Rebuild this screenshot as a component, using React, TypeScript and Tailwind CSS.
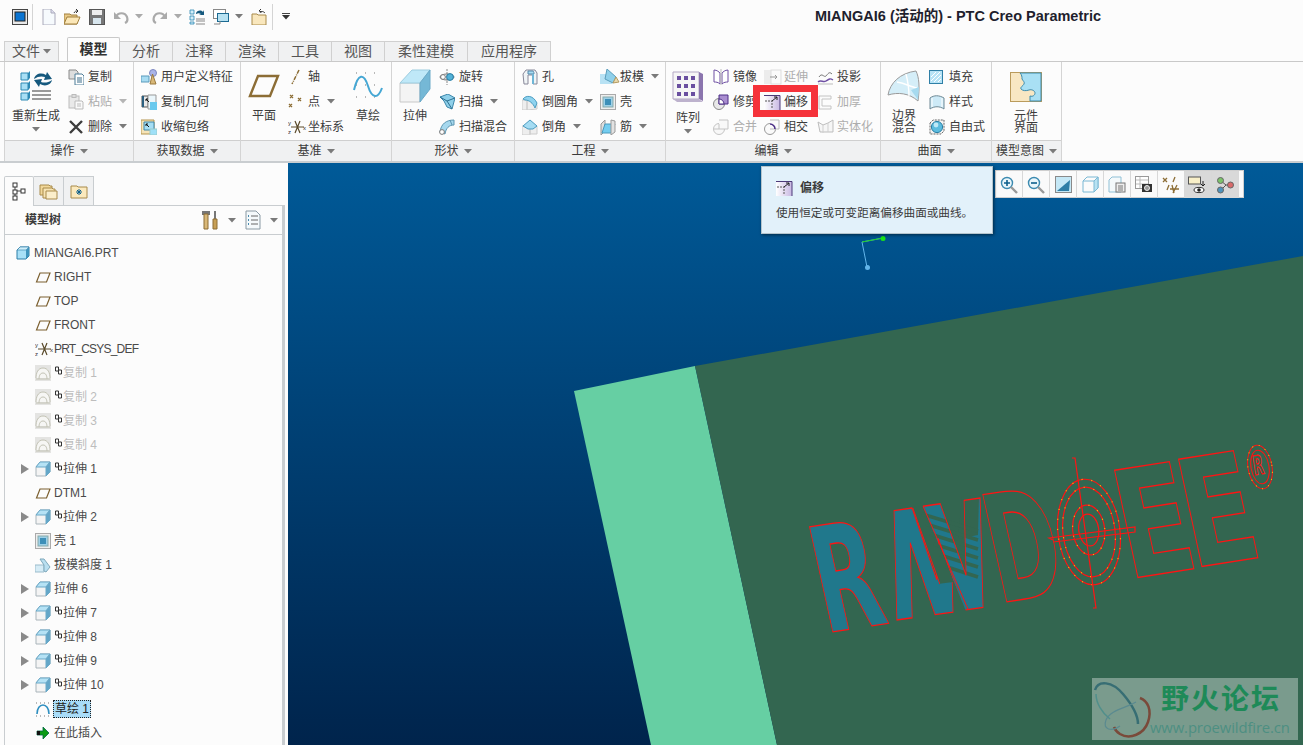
import type { ReactNode } from 'react';

const FONT = "font-['Liberation_Sans','Noto_Sans_CJK_SC',sans-serif]";

function Svg({ w = 16, h = 16, children }: { w?: number; h?: number; children: ReactNode }) {
  return (
    <svg width={w} height={h} viewBox={`0 0 ${w} ${h}`} className="shrink-0">
      {children}
    </svg>
  );
}

function Caret({ color = '#7a7a7a' }: { color?: string }) {
  return (
    <svg width="8" height="5" viewBox="0 0 8 5" className="shrink-0">
      <path d="M0 0h8L4 4.5z" fill={color} />
    </svg>
  );
}

// 小图标
const cube = (
  <Svg>
    <path d="M1 6l4-5h10v10l-4 4H1z" fill="#f4f4f4" stroke="#a9b4ba" />
    <path d="M1 6l4-5h10l-4 5z" fill="#b5e2f5" stroke="#6aa9c8" />
    <path d="M11 6l4-5v10l-4 4z" fill="#63a6c8" stroke="#6aa9c8" />
  </Svg>
);
const part = (
  <Svg w={14}>
    <path d="M1 5l3-3h9v9l-3 3H1z" fill="#a8e0f7" stroke="#2c7ea8" />
    <path d="M10 5l3-3v9l-3 3z" fill="#3f94bd" />
    <path d="M1 5l3-3h9l-3 3z" fill="#cfeefa" stroke="#2c7ea8" strokeWidth="0.6" />
  </Svg>
);
const plane = (
  <Svg>
    <path d="M1.500 13L5 4h10l-3.500 9z" fill="none" stroke="#7b5f2f" strokeWidth="1.2" />
  </Svg>
);
const csys = (
  <Svg w={20}>
    <path d="M7 2l5 12M12 2L7 14M3 8h13" stroke="#5a4a2a" strokeWidth="1.2" fill="none" />
    <text x="0" y="6" fontSize="6" fill="#333">y</text>
    <text x="0" y="15" fontSize="6" fill="#333">z</text>
    <text x="15" y="11" fontSize="6" fill="#333">x</text>
  </Svg>
);
const copyGrey = (
  <Svg>
    <rect width="16" height="16" fill="#e4e4e2" />
    <path d="M1 13c0-5 2-10 7-10s7 5 7 10" fill="#f6f6f4" stroke="#c2c2b4" />
    <path d="M4 14c0-3 1-6 4-6s4 3 4 6M1 14h14" fill="none" stroke="#c2c2b4" />
  </Svg>
);
const shell = (
  <Svg>
    <rect x="0.5" y="0.5" width="15" height="15" fill="#eee" stroke="#aaa" />
    <rect x="3" y="3" width="10" height="10" fill="#9cd0e8" stroke="#8aa" />
    <rect x="5" y="5" width="6" height="6" fill="#3d8fb8" />
  </Svg>
);
const draft = (
  <Svg>
    <path d="M0 8h9v7H0z" fill="#d6ecf6" stroke="#9bbccc" />
    <path d="M5 2h4l6 8-4 5-2-1V8z" fill="#b9dff0" stroke="#7fa8bb" />
  </Svg>
);
const sketchNode = (
  <Svg>
    <path d="M2 13c0-6 3-9 6-9s6 3 6 9" fill="none" stroke="#2f8fc0" strokeWidth="1.6" />
    <path d="M1 2h14M1 15h14" stroke="#777" strokeDasharray="1 3" />
  </Svg>
);
const insert = (
  <Svg>
    <path d="M2 6h6V2l6 6-6 6v-4H2z" fill="#0b9a14" stroke="#064" strokeWidth="0.8" />
    <path d="M2 6h3v4H2z" fill="#111" />
  </Svg>
);

const copyDoc = (
  <Svg>
    <path d="M1 1h7l2 2v7H1z" fill="#ddd" stroke="#8a8a8a" />
    <path d="M7 5h7l2 2v9H7z" fill="#fff" stroke="#4d7c98" />
    <path d="M9 9h5M9 11h5M9 13h5" stroke="#3a6c8a" />
  </Svg>
);
const pasteGrey = (
  <Svg>
    <rect x="1" y="2" width="10" height="12" fill="#e9e9e9" stroke="#bbb" />
    <rect x="4" y="0.5" width="4" height="3" fill="#ddd" stroke="#bbb" />
    <path d="M7 7h7l1 1v7H7z" fill="#fafafa" stroke="#bbb" />
    <path d="M9 10h4M9 12h4" stroke="#bbb" />
  </Svg>
);
const del = (
  <Svg>
    <path d="M2 2l12 12M14 2L2 14" stroke="#3d3d3d" strokeWidth="2.4" />
  </Svg>
);
const udf = (
  <Svg>
    <path d="M0 7h8v6H0z" fill="#a8dcf2" stroke="#5a9abb" />
    <circle cx="12" cy="4" r="3.500" fill="#aab4e8" stroke="#7c86c0" />
    <path d="M9 15l2.500-10 3.500 10z" fill="#d9b878" stroke="#9a7a3e" />
  </Svg>
);
const copyGeom = (
  <Svg>
    <path d="M1 2h6v11H1z" fill="#e8e8e8" stroke="#555" />
    <path d="M2 2v11" stroke="#2a5f80" strokeWidth="2" />
    <path d="M7 1h8v14H7z" fill="#eaf6fb" stroke="#999" />
    <path d="M9 8h7v8H9z" fill="#69c9ee" />
    <path d="M5 5l3 3M5 5h2M5 5v2" stroke="#111" />
  </Svg>
);
const shrink = (
  <Svg>
    <path d="M0 1h13v14H0z" fill="#f6e4b8" stroke="#b4954f" />
    <path d="M3 3h10v8H3z" fill="#a6def4" stroke="#3f86a8" />
    <path d="M5 5l3 3M5 5h2M5 5v2" stroke="#111" />
    <path d="M9 10h7v6H9z" fill="#9fe0f8" stroke="#9cc" />
  </Svg>
);
const axis = (
  <Svg>
    <path d="M11 1L4 15" stroke="#8c6d35" strokeWidth="1.5" strokeDasharray="4 1 1 1" fill="none" />
  </Svg>
);
const point = (
  <Svg>
    <path d="M2 1l3 3M5 1L2 4M10 4l3 3M13 4l-3 3M1 10l3 3M4 10l-3 3" stroke="#8c6d35" strokeWidth="1.3" />
  </Svg>
);
const revolve = (
  <Svg>
    <path d="M8 0v16" stroke="#888" strokeDasharray="2 1" />
    <ellipse cx="8" cy="8" rx="7" ry="3" fill="none" stroke="#777" />
    <circle cx="11" cy="8" r="3.400" fill="#53b2d8" stroke="#2a7ea4" />
    <circle cx="4" cy="8" r="2.400" fill="#fff" stroke="#777" />
  </Svg>
);
const sweep = (
  <Svg>
    <path d="M1 3l8-3 7 4-3 11-5-2-3-6z" fill="#8fd0ea" stroke="#3b86aa" />
    <path d="M1 3l7 4 8-3M8 7l5 8" stroke="#2d6f90" fill="none" />
  </Svg>
);
const sweepBlend = (
  <Svg>
    <path d="M1 13C2 5 7 1 15 1v5c-5 0-8 3-9 9z" fill="#a6d8ee" stroke="#5c96b2" />
    <circle cx="3" cy="13" r="2.400" fill="#fff" stroke="#777" />
    <path d="M11 1l2 5" stroke="#5c96b2" />
  </Svg>
);
const hole = (
  <Svg>
    <path d="M1 5l3-4h9l2 3v11h-4V6H6v9H2z" fill="#f0f4f6" stroke="#889" />
    <path d="M6 2h5c1 1 1 2 1 3H6z" fill="#a8dcf2" stroke="#58a" />
    <path d="M10 5h2v10h-2z" fill="#6fb6d6" />
  </Svg>
);
const round = (
  <Svg>
    <path d="M0 6h5v10H0zM5 6v10l10-1V12C15 8 10 4 5 6z" fill="#eee" stroke="#ccc" />
    <path d="M1 5C4 1 11 1 15 9l-2 5C11 9 7 6 3 6z" fill="#8fd3ef" stroke="#4c9cc0" />
  </Svg>
);
const chamfer = (
  <Svg>
    <path d="M0 7h8v9H0zM8 7l7 0v8H8z" fill="#eee" stroke="#ccc" />
    <path d="M1 7l7-6 7 6-4 3H6z" fill="#a4dcf3" stroke="#4c9cc0" />
  </Svg>
);
const pullDraft = (
  <Svg w={20}>
    <path d="M0 5h12v10H0z" fill="#b8e2f4" />
    <path d="M7 0l9 8-3 6-8-4z" fill="#8fd0ea" stroke="#5b9dbb" />
    <path d="M13 14l3-6 3 5z" fill="#e8d9ae" stroke="#b49a5f" />
  </Svg>
);
const ribs = (
  <Svg>
    <path d="M1 5l4-4v11l-4 4z" fill="#ddd" stroke="#999" />
    <path d="M5 5h10l-3 9H2z" fill="#74cdf0" stroke="#4a9abd" />
    <path d="M11 1l4 1v11l-4 3z" fill="#e2e2e2" stroke="#999" />
  </Svg>
);
const mirror = (
  <Svg>
    <path d="M1 1c3 0 5 2 6 3v11c-2-2-4-2-6-2z" fill="#fff" stroke="#6e4fa3" />
    <path d="M15 1c-3 0-5 2-6 3v11c2-2 4-2 6-2z" fill="#fff" stroke="#6e4fa3" />
    <path d="M8 0v16" stroke="#bbb" />
  </Svg>
);
const trim = (
  <Svg>
    <circle cx="6" cy="10" r="5.500" fill="#e8e8e8" stroke="#888" />
    <path d="M6 1h9v9H6z" fill="#a98ed0" stroke="#4c2f86" />
    <path d="M6 10V5a5 5 0 0 1 5 5z" fill="#fff" stroke="#4c2f86" />
  </Svg>
);
const merge = (
  <Svg>
    <circle cx="6" cy="10" r="5.500" fill="#f8f8f8" stroke="#c4c4c4" />
    <path d="M6 1h9v9H6" fill="#f8f8f8" stroke="#c4c4c4" />
    <path d="M1 10h5V5" fill="none" stroke="#c4c4c4" />
  </Svg>
);
const extend = (
  <Svg w={18}>
    <rect x="0" y="1" width="7" height="14" fill="#ececec" />
    <rect x="7" y="1" width="10" height="14" fill="#fbfbfb" stroke="#ddd" />
    <path d="M6 8h7M11 6l2 2-2 2" stroke="#999" fill="none" />
  </Svg>
);
const offset = (
  <Svg w={18}>
    <defs>
      <linearGradient id="off" x1="0" y1="0" x2="1" y2="0">
        <stop offset="0" stopColor="#fff" />
        <stop offset="1" stopColor="#c8b7e2" />
      </linearGradient>
    </defs>
    <path d="M0 1h16v15H0z" fill="url(#off)" />
    <path d="M0 1.500h16V16" fill="none" stroke="#4c3a78" />
    <path d="M1 7h7v8" fill="none" stroke="#555" strokeDasharray="2 1" />
    <path d="M8 7l5-4M10 3h3v3" fill="none" stroke="#222" />
  </Svg>
);
const intersect = (
  <Svg>
    <circle cx="6" cy="10" r="5.500" fill="#fafafa" stroke="#999" />
    <path d="M6 1h9v9H6" fill="#fafafa" stroke="#bbb" />
    <path d="M6 5a5 5 0 0 1 5 5" fill="none" stroke="#4c2f86" strokeWidth="1.6" />
  </Svg>
);
const project = (
  <Svg w={18}>
    <path d="M2 8c3-5 5 1 7-1s3-5 6-2" fill="none" stroke="#777" />
    <path d="M1 13c3-3 5 1 8-1s4-3 7-1" fill="none" stroke="#6e4fa3" strokeWidth="1.4" />
    <path d="M1 15h15" stroke="#bbb" />
  </Svg>
);
const thicken = (
  <Svg w={18}>
    <path d="M2 2h12v3H5v7h9v3H2z" fill="#fbfbfb" stroke="#c4c4c4" />
  </Svg>
);
const solidify = (
  <Svg w={18}>
    <path d="M1 3l5 3 5-2 5-3v12H3z" fill="#f6f6f6" stroke="#bdbdbd" />
    <path d="M6 6v8M11 4v9" stroke="#cfcfcf" />
  </Svg>
);
const fill = (
  <Svg w={14} h={14}>
    <rect x="0.5" y="0.5" width="13" height="13" fill="#b7e3f6" stroke="#2f7fa6" />
    <path d="M2 7l5-5M2 11l9-9M5 12l7-7M9 12l3-3" stroke="#fff" />
  </Svg>
);
const style = (
  <Svg>
    <path d="M1 4c4-3 9-3 14 0v11c-4-3-10-3-14 0z" fill="#cdeaf7" stroke="#6e8894" />
    <path d="M3 4v9M13 4v9" stroke="#fff" />
  </Svg>
);
const freeStyle = (
  <Svg>
    <path d="M1 4l3-3h11v11l-3 3H1z" fill="#f2f2f2" stroke="#666" strokeDasharray="2 1" />
    <circle cx="8" cy="8" r="5.600" fill="#5cbcdf" stroke="#2b7fa4" />
    <circle cx="7" cy="6" r="2.400" fill="#bfe9f7" />
  </Svg>
);

// 大图标
const regenIcon = (
  <Svg w={36} h={32}>
    <path d="M3 3h7v7H3zM3 13h7v7H3zM3 23h7v7H3z" fill="#a8dff5" stroke="#2f89b3" />
    <path d="M10 3l2-2v7l-2 2zM10 13l2-2v7l-2 2zM10 23l2-2v7l-2 2z" fill="#2f89b3" />
    <path d="M16 9c1-5 7-7 12-4l1-3 5 7-8 1 1-3c-3-1-7-1-11 2zM34 10c-1 5-7 7-12 4l-1 3-5-7 8-1-1 3c3 1 7 1 11-2z" fill="#16597e" />
    <path d="M14 21h19M14 25h19M14 29h19" stroke="#9a9a9a" strokeWidth="2" />
  </Svg>
);
const planeIcon = (
  <Svg w={32} h={24}>
    <path d="M2 22L10 2h20l-8 20z" fill="none" stroke="#8c6d35" strokeWidth="2.4" />
  </Svg>
);
const sketchIcon = (
  <Svg w={30} h={30}>
    <path d="M3 2h24M3 14h24M3 26h24" stroke="#777" strokeDasharray="1 8" />
    <path d="M1 19C5 2 11 2 15 15s10 13 14 2" fill="none" stroke="#45a7d4" strokeWidth="2" />
  </Svg>
);
const extrudeIcon = (
  <Svg w={32} h={34}>
    <path d="M1 14h20v19H1z" fill="#f4f4f4" stroke="#c8c8c8" />
    <path d="M1 14L13 1h18L21 14z" fill="#bfe8f8" stroke="#9cccdf" />
    <path d="M21 14L31 1v19L21 33z" fill="#75b8d6" stroke="#6aa9c8" />
  </Svg>
);
const patternIcon = (
  <Svg w={32} h={32}>
    <path d="M1 1h26v27H1z" fill="#f6f6f6" stroke="#b3a8c4" />
    <path d="M27 1l4 2v27l-4-2z" fill="#8b75ae" />
    <path d="M1 28l4 3h26l-4-3z" fill="#bdb2cd" />
    {[5, 13, 21].map(y =>
      [5, 12, 19].map(x => <rect key={`${x}-${y}`} x={x} y={y} width="4" height="4" fill="#6a4fa0" />)
    )}
  </Svg>
);
const boundaryIcon = (
  <Svg w={34} h={34}>
    <path d="M1 25C3 13 13 3 29 1c3 6 4 16 2 30-9-8-20-9-30-6z" fill="#d5eef8" stroke="#9a9a9a" />
    <path d="M10 12c7 1 14 5 20 6M19 4c2 8 3 16 3 22" fill="none" stroke="#fff" strokeWidth="1.4" />
    <path d="M24 20c2 3 5 7 7 10l1-13z" fill="#a6daef" />
  </Svg>
);
const interfaceIcon = (
  <Svg w={32} h={30}>
    <rect x="0.5" y="0.5" width="31" height="29" fill="#f8e7c3" stroke="#ba9b5c" />
    <path d="M10 1h21v28H20v-5c3 1 5-1 5-3s-3-4-6-3c-3 1-6 1-8-1-1-2 2-3 3-5s-1-3-2-5c0-2 0-4-2-6z" fill="#a9e0f4" stroke="#3c8bad" />
  </Svg>
);

function Item({ icon, label, grey, caret }: { icon: ReactNode; label: string; grey?: boolean; caret?: boolean }) {
  return (
    <div className={`flex h-[25px] items-center gap-[3px] whitespace-nowrap text-[12px] ${grey ? 'text-[#adadad]' : 'text-[#3b3b3b]'}`}>
      <div className="flex w-[17px] shrink-0 justify-start">{icon}</div>
      <span>{label}</span>
      {caret && <span className="ml-[4px]"><Caret color={grey ? '#b5b5b5' : '#7a7a7a'} /></span>}
    </div>
  );
}

function Large({ w, icon, label, caret, two, boxH = 44 }: { w: number; icon: ReactNode; label: ReactNode; caret?: boolean; two?: boolean; boxH?: number }) {
  return (
    <div style={{ width: w }} className="flex shrink-0 flex-col items-center text-[12px] text-[#3b3b3b]">
      <div style={{ height: two ? 46 : boxH }} className="flex items-center justify-center">{icon}</div>
      <div className={`text-center ${two ? 'leading-[12px]' : 'leading-[16px]'}`}>{label}</div>
      {caret && <div className="mt-[3px]"><Caret /></div>}
    </div>
  );
}

function Group({ w, label, children, pl = 0 }: { w: number; label: string; children: ReactNode; pl?: number }) {
  return (
    <div style={{ width: w }} className="flex shrink-0 flex-col border-r border-[#d4d4d4]">
      <div style={{ paddingLeft: pl }} className="-ml-[1px] flex h-[78px] pt-[2px]">{children}</div>
      <div className="flex h-[21px] items-center justify-center gap-[5px] border-t border-[#cfcfcf] bg-[#f0f1f2] text-[12px] text-[#3b3b3b]">
        {label}
        <Caret />
      </div>
    </div>
  );
}

function Tab({ label, w, active }: { label: string; w: number; active?: boolean }) {
  return (
    <div
      style={{ width: w }}
      className={
        active
          ? 'relative z-10 -mt-[3px] flex h-[24px] items-center justify-center rounded-t-[2px] border border-b-0 border-[#c9c9c9] bg-[#fdfdfd] text-[14px] font-bold text-[#333]'
          : 'flex h-[20px] items-center justify-center border-t border-r border-[#d0d0d0] bg-[#f0f1f2] text-[14px] text-[#555]'
      }
    >
      {label}
    </div>
  );
}

const linkMark = (
  <svg width="8" height="10" viewBox="0 0 8 10" className="mb-[5px] shrink-0">
    <path d="M1.500 1h3v4h-3zM4.500 4h3v4h-3z" fill="none" stroke="#333" />
  </svg>
);

type Row = { icon: ReactNode; t: string; link?: boolean; grey?: boolean; arrow?: boolean; sel?: boolean; tight?: boolean };

const TREE: Row[] = [
  { icon: plane, t: 'RIGHT' },
  { icon: plane, t: 'TOP' },
  { icon: plane, t: 'FRONT' },
  { icon: csys, t: 'PRT_CSYS_DEF', tight: true },
  { icon: copyGrey, t: '复制 1', link: true, grey: true },
  { icon: copyGrey, t: '复制 2', link: true, grey: true },
  { icon: copyGrey, t: '复制 3', link: true, grey: true },
  { icon: copyGrey, t: '复制 4', link: true, grey: true },
  { icon: cube, t: '拉伸 1', link: true, arrow: true },
  { icon: plane, t: 'DTM1' },
  { icon: cube, t: '拉伸 2', link: true, arrow: true },
  { icon: shell, t: '壳 1' },
  { icon: draft, t: '拔模斜度 1' },
  { icon: cube, t: '拉伸 6', arrow: true },
  { icon: cube, t: '拉伸 7', link: true, arrow: true },
  { icon: cube, t: '拉伸 8', link: true, arrow: true },
  { icon: cube, t: '拉伸 9', link: true, arrow: true },
  { icon: cube, t: '拉伸 10', link: true, arrow: true },
  { icon: sketchNode, t: '草绘 1', sel: true },
  { icon: insert, t: '在此插入' },
];

function TreeRow({ row }: { row: Row }) {
  return (
    <div className="flex h-[24px] shrink-0 items-center pl-[16px] text-[12px]">
      <div className="w-[14px] shrink-0">
        {row.arrow && (
          <svg width="8" height="10" viewBox="0 0 8 10">
            <path d="M0 0l8 5-8 5z" fill="#8a8a8a" />
          </svg>
        )}
      </div>
      <div className="w-[19px] shrink-0">{row.icon}</div>
      {row.link && linkMark}
      <span
        className={`whitespace-nowrap ${row.link ? 'ml-[1px]' : ''} ${row.tight ? 'tracking-[-0.8px]' : ''} ${row.grey ? 'text-[#bdbdbd]' : 'text-[#4a4a4a]'} ${
          row.sel ? '-ml-[1px] border border-dotted border-[#222] bg-[#a9dcf8] px-[1px] leading-[16px] text-[#222]' : ''
        }`}
      >
        {row.t}
      </span>
    </div>
  );
}

const vb = 'flex h-[27px] w-[27px] items-center justify-center border-r border-[#d8d8d8]';

function ViewToolbar() {
  return (
    <div className="absolute right-[59px] top-[7px] flex h-[28px] w-[249px] border border-[#cfcfcf] bg-[#fafafa]">
      <div className={vb}>
        <Svg w={18} h={18}>
          <circle cx="7" cy="7" r="5.500" fill="#eaf6fb" stroke="#3b8ab0" strokeWidth="1.4" />
          <path d="M4 7h6M7 4v6" stroke="#0d5f8c" strokeWidth="1.6" />
          <path d="M11 11l6 6" stroke="#999" strokeWidth="2.4" />
        </Svg>
      </div>
      <div className={vb}>
        <Svg w={18} h={18}>
          <circle cx="7" cy="7" r="5.500" fill="#eaf6fb" stroke="#3b8ab0" strokeWidth="1.4" />
          <path d="M4 7h6" stroke="#0d5f8c" strokeWidth="1.6" />
          <path d="M11 11l6 6" stroke="#999" strokeWidth="2.4" />
        </Svg>
      </div>
      <div className={vb}>
        <Svg w={17} h={17}>
          <rect x="0.5" y="0.5" width="16" height="16" fill="#c5e8f6" stroke="#8a8a8a" />
          <path d="M2 15L15 4l-1 11z" fill="#2f7ea6" />
        </Svg>
      </div>
      <div className={vb}>
        <Svg w={17} h={17}>
          <path d="M1 5l4-4h11v11l-4 4H1z" fill="#fbfbfb" stroke="#7ab8d4" />
          <path d="M12 5l4-4v11l-4 4z" fill="#b8e2f2" stroke="#7ab8d4" />
          <path d="M1 5h11l4-4" fill="none" stroke="#7ab8d4" />
        </Svg>
      </div>
      <div className={vb}>
        <Svg w={18} h={17}>
          <path d="M1 4l3-3h9v15H1z" fill="#f4f9fb" stroke="#8fc0d6" />
          <rect x="8" y="7" width="9" height="9" fill="#eee" stroke="#777" />
          <path d="M10 10h5M10 12h5M10 14h5" stroke="#777" />
        </Svg>
      </div>
      <div className={vb}>
        <Svg w={18} h={17}>
          <rect x="0.5" y="0.5" width="13" height="12" fill="#fff" stroke="#999" />
          <path d="M1 4h12M1 8h12M5 1v11" stroke="#bbb" />
          <rect x="7" y="8" width="10" height="8" fill="#333" />
          <circle cx="12" cy="12" r="2.500" fill="#999" stroke="#eee" />
        </Svg>
      </div>
      <div className={vb}>
        <Svg w={18} h={18}>
          <path d="M1 2l4 4M5 2L1 6M5 14l2-5M13 1l-2 5M10 9l2 8M15 9l-4 8M8 13h9" stroke="#8c6d35" strokeWidth="1.3" />
        </Svg>
      </div>
      <div className={`${vb} bg-[#d9d9d9]`}>
        <Svg w={20} h={18}>
          <rect x="0.5" y="1" width="12" height="7" fill="#f8efc8" stroke="#555" />
          <path d="M15 5v5M13 8l2 2 2-2" stroke="#222" fill="none" />
          <ellipse cx="11" cy="14" rx="5" ry="2.600" fill="#fff" stroke="#333" />
          <circle cx="11" cy="14" r="1.800" fill="#222" />
        </Svg>
      </div>
      <div className={`${vb} bg-[#d9d9d9]`}>
        <Svg w={18} h={18}>
          <path d="M5 5l5 4-5 5M10 9h4" stroke="#555" fill="none" />
          <circle cx="4.500" cy="4.500" r="3" fill="#7cc36a" stroke="#666" />
          <circle cx="14.500" cy="9" r="3" fill="#d96a6a" stroke="#666" />
          <circle cx="4.500" cy="14" r="3" fill="#4d93bd" stroke="#666" />
        </Svg>
      </div>
    </div>
  );
}

const GLYPH = {
  fontFamily: '"DejaVu Sans", sans-serif',
  fontWeight: 700,
  fontSize: 100,
} as const;

const RED = '#ff1414';

function Glyph({ ch, m, fillColor = 'none' }: { ch: string; m: string; fillColor?: string }) {
  return (
    <text transform={`matrix(${m})`} style={GLYPH} fill={fillColor} stroke={RED} strokeWidth="0.9">
      {ch}
    </text>
  );
}

function Model() {
  const teal = '#20788c';
  const n1 = '.86,-.12,.04,1.5,889,621';
  const n2 = '.9,-.13,.04,1.5,916,617';
  return (
    <svg className="absolute inset-0 h-full w-full" viewBox="288 163 1015 582">
      <defs>
        <clipPath id="nLeft">
          <path d="M0-80H31V-73L60-20H80V5H0z" />
        </clipPath>
        <clipPath id="nRight">
          <path d="M9-80H80V5H58L11-73z" />
        </clipPath>
      </defs>

      {/* 实体面 */}
      <path d="M574 391L695 366 777 745H651z" fill="#66cfa3" />
      <path d="M695 366L1303 256V745H777z" fill="#336650" />

      {/* 三维坐标系 */}
      <path d="M883 238l-21 4 5 25" fill="none" stroke="#62b5ea" />
      <path d="M862 242l21-4" stroke="#1fd11f" />
      <circle cx="883" cy="238.500" r="2.500" fill="#19e319" />
      <circle cx="867.500" cy="267.500" r="2.500" fill="#62b5ea" />

      {/* 文字轮廓 */}
      <Glyph ch="R" m=".85,-.13,.32,1.44,825,633" fillColor={teal} />
      <g transform={`matrix(${n1})`}>
        <text style={GLYPH} clipPath="url(#nLeft)" fill={teal} stroke={RED} strokeWidth="0.9">N</text>
        <path d="M31-73L60-20" stroke={RED} strokeWidth="0.9" fill="none" />
      </g>
      <text transform={`matrix(${n2})`} style={GLYPH} clipPath="url(#nRight)" fill={teal}>N</text>
      <path d="M962 497l17-2-1 40-20 4z" fill="#336650" />
      <g stroke="#336650" strokeWidth="3.500">
        <path d="M922 514l56 17M926 524l52 16M930 534l48 15M934 544l44 14M940 555l38 12M944 566l34 11" />
      </g>
      <g transform={`matrix(${n2})`}>
        <text style={GLYPH} clipPath="url(#nRight)" fill="none" stroke={RED} strokeWidth="0.9">N</text>
        <path d="M58 0L11-73" stroke={RED} strokeWidth="0.9" fill="none" />
      </g>
      <Glyph ch="D" m=".85,-.13,.33,1.47,999,603" />
      <Glyph ch="E" m="1.08,-.17,.32,1.47,1128,579" />
      <Glyph ch="E" m="1.08,-.17,.32,1.47,1192,568" />

      {/* 靶心 */}
      <g fill="none" stroke={RED} strokeWidth="1.2">
        <g transform="rotate(-7 1089 532)">
          <ellipse cx="1089" cy="532" rx="31" ry="53" />
          <ellipse cx="1089" cy="532" rx="26" ry="45" />
          <ellipse cx="1089" cy="530" rx="16" ry="25" />
          <ellipse cx="1089" cy="530" rx="10" ry="16" />
          <ellipse cx="1089" cy="532" rx="31" ry="53" stroke="#ffc400" strokeDasharray="1 9" />
          <ellipse cx="1089" cy="532" rx="26" ry="45" stroke="#ffc400" strokeDasharray="1 9" />
          <ellipse cx="1089" cy="530" rx="16" ry="25" stroke="#ffc400" strokeDasharray="1 9" />
        </g>
        <path d="M1072 458l3 0 21 150-3 0M1053 540l-4 -2 86 -11v5l-82 10" />
      </g>

      {/* 注册商标 */}
      <g fill="none" stroke={RED} transform="rotate(-10 1260 467)">
        <ellipse cx="1260" cy="467" rx="12" ry="22" />
        <ellipse cx="1260" cy="467" rx="9" ry="17" />
        <ellipse cx="1260" cy="467" rx="12" ry="22" stroke="#ffc400" strokeDasharray="1 6" />
      </g>
      <text transform="matrix(.14,-.02,.04,.26,1254,475)" style={GLYPH} fill="none" stroke={RED} strokeWidth="5">R</text>
    </svg>
  );
}

function Watermark() {
  return (
    <div className="absolute bottom-[5px] right-[5px] flex h-[62px] w-[206px] bg-[#ffffff]/35">
      <svg width="60" height="62" viewBox="0 0 60 62" className="shrink-0 overflow-visible">
        <path d="M3 12C6 2 20 3 31 16s15 24 15 30" fill="none" stroke="#2b6670" strokeWidth="2.500" opacity=".85" />
        <path d="M4 16c0 9 6 19 14 25" fill="none" stroke="#3e8a8a" strokeWidth="1.5" opacity=".7" />
        <path d="M48 20c8 3 12 12 8 24s-18 18-28 12c-3-2-5-4-6-7" fill="none" stroke="#7a4a3a" strokeWidth="2.500" />
        <path d="M44 24c-10 6-26 8-30 18s6 12 14 6" fill="none" stroke="#5a8a90" strokeWidth="1.2" />
      </svg>
      <div className="flex flex-col">
        <div className="mt-[5px] pl-[9px] text-[28px] font-bold leading-[34px] tracking-[2px] text-[#1e8a58]">野火论坛</div>
        <div className="-ml-[2px] mt-[1px] whitespace-nowrap font-['Open_Sans',sans-serif] text-[14.8px] leading-[18px] tracking-[-.1px] text-[#4d8f82]">
          www.proewildfire.cn
        </div>
      </div>
    </div>
  );
}

export default function App() {
  return (
    <div className={`relative flex h-[745px] w-[1303px] flex-col overflow-hidden bg-[#fcfcfc] ${FONT}`}>
      {/* 标题栏 */}
      <div className="flex h-[39px] shrink-0 items-center pl-[12px] pb-[6px]">
        <Svg>
          <rect x="0.5" y="0.5" width="15" height="15" fill="#e8e8e8" stroke="#444" />
          <rect x="3" y="3" width="10" height="9" fill="#0b74d1" stroke="#222" />
        </Svg>
        <div className="ml-[4px] mr-[9px] h-[26px] w-px bg-[#d4d4d4]" />
        <Svg w={14}>
          <path d="M1 0h8l4 4v12H1z" fill="#f6fafd" stroke="#aab" />
          <path d="M9 0v4h4" fill="#dde" stroke="#aab" />
        </Svg>
        <div className="ml-[8px]">
          <Svg w={17}>
            <path d="M0 5h6l1 1h6v9H0z" fill="#e8c987" stroke="#a07f3c" />
            <path d="M0 15l3-7h13l-3 7z" fill="#fbe7b8" stroke="#a07f3c" />
            <path d="M10 4c1-2 2-2 3-2M12 0l2 2-2 2" stroke="#333" fill="none" />
          </Svg>
        </div>
        <div className="ml-[8px]">
          <Svg>
            <rect x="0.5" y="0.5" width="15" height="15" fill="#777" stroke="#555" />
            <rect x="3" y="1" width="10" height="5" fill="#eee" />
            <rect x="4" y="9" width="8" height="6" fill="#d8e6ee" />
          </Svg>
        </div>
        <div className="ml-[8px]">
          <Svg>
            <path d="M3 8c2-5 9-5 11 0 1 3 0 5-2 6" fill="none" stroke="#aaa" strokeWidth="2.2" />
            <path d="M1 3v7h7z" fill="#aaa" />
          </Svg>
        </div>
        <div className="ml-[6px]"><Caret color="#aaa" /></div>
        <div className="ml-[9px]">
          <Svg>
            <path d="M13 8C11 3 4 3 2 8c-1 3 0 5 2 6" fill="none" stroke="#aaa" strokeWidth="2.2" />
            <path d="M15 3v7H8z" fill="#aaa" />
          </Svg>
        </div>
        <div className="ml-[6px]"><Caret color="#aaa" /></div>
        <div className="ml-[7px]">
          <Svg>
            <path d="M1 1h4v4H1zM1 7h4v4H1zM1 13h4v2H1z" fill="#d4effa" stroke="#2f89b3" strokeWidth="0.8" />
            <path d="M7 4c2-3 5-3 7-1l1-2v5h-5l2-1c-2-1-3-1-5 0z" fill="#16597e" />
            <path d="M7 10h9M7 12h9M7 15h9" stroke="#888" />
          </Svg>
        </div>
        <div className="ml-[8px]">
          <Svg>
            <rect x="0.5" y="0.5" width="12" height="9" fill="#fff" stroke="#888" />
            <rect x="4.500" y="4.500" width="11" height="8" fill="#b8e2f2" stroke="#1b6a92" />
            <path d="M7 12v3M1 15h6" stroke="#888" />
          </Svg>
        </div>
        <div className="ml-[6px]"><Caret /></div>
        <div className="ml-[8px]">
          <Svg>
            <path d="M1 5h5l1 1h8v10H1z" fill="#f9e7bd" stroke="#a88a4a" />
            <path d="M14 4c-2-2-4-2-5 0M10 0L8 2l3 1" stroke="#333" fill="none" />
          </Svg>
        </div>
        <div className="ml-[5px] mr-[9px] h-[26px] w-px bg-[#d4d4d4]" />
        <div className="flex flex-col items-center gap-[1px]">
          <div className="h-px w-[8px] bg-[#444]" />
          <Caret color="#333" />
        </div>
        <div className="ml-auto mr-[202px] text-[14.5px] font-bold text-[#1f1f2e]">MIANGAI6 (活动的) - PTC Creo Parametric</div>
      </div>

      {/* 选项卡 */}
      <div className="mt-[3px] flex h-[20px] shrink-0 items-end border-b border-[#c9c9c9] pl-[4px]">
        <div className="mr-[8px] flex h-[20px] w-[55px] items-center justify-center gap-[3px] border border-b-0 border-[#d0d0d0] bg-[#f0f1f2] text-[14px] text-[#555]">
          文件
          <Caret />
        </div>
        <Tab label="模型" w={53} active />
        <Tab label="分析" w={53} />
        <Tab label="注释" w={53} />
        <Tab label="渲染" w={53} />
        <Tab label="工具" w={53} />
        <Tab label="视图" w={53} />
        <Tab label="柔性建模" w={83} />
        <Tab label="应用程序" w={83} />
      </div>

      {/* 功能区 */}
      <div className="flex h-[101px] shrink-0 border-b-2 border-[#c9cdd0] pl-[4px]">
        <div className="flex border-l border-[#d4d4d4]">
          <Group w={129} label="操作" pl={2}>
            <Large w={60} icon={regenIcon} label="重新生成" caret />
            <div className="ml-[2px]">
              <Item icon={copyDoc} label="复制" />
              <Item icon={pasteGrey} label="粘贴" grey caret />
              <Item icon={del} label="删除" caret />
            </div>
          </Group>
          <Group w={107} label="获取数据" pl={8}>
            <div>
              <Item icon={udf} label="用户定义特征" />
              <Item icon={copyGeom} label="复制几何" />
              <Item icon={shrink} label="收缩包络" />
            </div>
          </Group>
          <Group w={151} label="基准">
            <Large w={48} icon={planeIcon} label="平面" />
            <div className="w-[56px]">
              <Item icon={axis} label="轴" />
              <Item icon={point} label="点" caret />
              <Item icon={csys} label="坐标系" />
            </div>
            <Large w={48} icon={sketchIcon} label="草绘" />
          </Group>
          <Group w={123} label="形状">
            <Large w={48} icon={extrudeIcon} label="拉伸" />
            <div>
              <Item icon={revolve} label="旋转" />
              <Item icon={sweep} label="扫描" caret />
              <Item icon={sweepBlend} label="扫描混合" />
            </div>
          </Group>
          <Group w={151} label="工程" pl={8}>
            <div className="w-[78px]">
              <Item icon={hole} label="孔" />
              <Item icon={round} label="倒圆角" caret />
              <Item icon={chamfer} label="倒角" caret />
            </div>
            <div>
              <Item icon={pullDraft} label="拔模" caret />
              <Item icon={shell} label="壳" />
              <Item icon={ribs} label="筋" caret />
            </div>
          </Group>
          <Group w={215} label="编辑">
            <Large w={46} boxH={46} icon={patternIcon} label="阵列" caret />
            <div className="ml-[2px] w-[51px]">
              <Item icon={mirror} label="镜像" />
              <Item icon={trim} label="修剪" />
              <Item icon={merge} label="合并" grey />
            </div>
            <div className="w-[53px]">
              <Item icon={extend} label="延伸" grey />
              <Item icon={offset} label="偏移" />
              <Item icon={intersect} label="相交" />
            </div>
            <div>
              <Item icon={project} label="投影" />
              <Item icon={thicken} label="加厚" grey />
              <Item icon={solidify} label="实体化" grey />
            </div>
          </Group>
          <Group w={111} label="曲面">
            <Large w={48} icon={boundaryIcon} label={<>边界<br />混合</>} two />
            <div className="ml-[1px]">
              <Item icon={fill} label="填充" />
              <Item icon={style} label="样式" />
              <Item icon={freeStyle} label="自由式" />
            </div>
          </Group>
          <Group w={70} label="模型意图">
            <Large w={70} icon={interfaceIcon} label={<>元件<br />界面</>} two />
          </Group>
        </div>
      </div>

      {/* 主体 */}
      <div className="flex min-h-0 flex-1">
        <div className="flex w-[288px] shrink-0 flex-col pl-[4px] pt-[13px]">
          <div className="flex h-[29px] shrink-0">
            <div className="relative z-10 flex h-[30px] w-[30px] items-center justify-center rounded-t-[2px] border border-b-0 border-[#c9cdd0] bg-[#fcfcfc]">
              <Svg w={14} h={19}>
                <path d="M3 5v9M3 9h7" stroke="#444" />
                <rect x="1" y="1" width="4" height="4" fill="#fff" stroke="#333" />
                <rect x="1" y="8" width="4" height="4" fill="#fff" stroke="#333" />
                <rect x="1" y="14" width="4" height="4" fill="#fff" stroke="#333" />
                <rect x="9" y="7" width="4" height="4" fill="#fff" stroke="#333" />
              </Svg>
            </div>
            <div className="flex w-[30px] items-center justify-center border-t border-r border-[#c9cdd0] bg-[#f0f1f2]">
              <Svg w={20} h={20}>
                <path d="M1 4h9l1 1h2v9H1z" fill="#f2d89a" stroke="#a88a4a" />
                <path d="M4 7h9l1 1h2v9H4z" fill="#f7e4b4" stroke="#a88a4a" />
                <path d="M7 10h11v8H7z" fill="#fbeecb" stroke="#a88a4a" />
              </Svg>
            </div>
            <div className="flex w-[30px] items-center justify-center border-t border-r border-[#c9cdd0] bg-[#f0f1f2]">
              <Svg w={18} h={16}>
                <path d="M1 3h6l1 1h9v11H1z" fill="#fbe9bd" stroke="#a88a4a" />
                <path d="M6 9h6M9 6v6M7 7l4 4M11 7l-4 4" stroke="#0d5f8c" />
              </Svg>
            </div>
          </div>
          <div className="flex min-h-0 w-[281px] flex-1 flex-col border-l border-t border-[#c9cdd0] border-r-[3px]">
            <div className="flex h-[29px] shrink-0 items-center border-b border-[#c9cdd0] pl-[20px] pr-[4px] text-[12px] font-bold text-[#3b3b3b]">
              模型树
              <div className="ml-auto flex items-center gap-[9px]">
                <Svg w={18} h={20}>
                  <path d="M1 1h8v4H1z" fill="#777" />
                  <path d="M3 4h4v15H3z" fill="#d9b878" stroke="#8c6d35" />
                  <path d="M14 1v8" stroke="#777" strokeWidth="2" />
                  <path d="M12 9h4v10h-4z" fill="#c79f55" stroke="#8c6d35" />
                </Svg>
                <Caret />
                <Svg w={16} h={20}>
                  <path d="M1 1h10l4 4v14H1z" fill="#f4f9fb" stroke="#8a9aa4" />
                  <path d="M6 6h7M6 10h7M6 14h7" stroke="#666" />
                  <path d="M3 6h1M3 10h1M3 14h1" stroke="#4a8aad" strokeWidth="2" />
                </Svg>
                <Caret />
              </div>
            </div>
            <div className="flex flex-col pt-[6px]">
              <div className="flex h-[24px] shrink-0 items-center gap-[4px] pl-[11px] text-[12px] text-[#4a4a4a]">
                {part}
                MIANGAI6.PRT
              </div>
              {TREE.map(row => (
                <TreeRow key={row.t} row={row} />
              ))}
            </div>
          </div>
        </div>

        <div className="relative min-w-0 flex-1 bg-gradient-to-b from-[#005a98] to-[#00244c]">
          <Model />
          <ViewToolbar />
          <Watermark />
        </div>
      </div>

      {/* 红框标注 */}
      <div className="absolute left-[753px] top-[85px] h-[32px] w-[65px] border-[7px] border-[#f5323a]" />

      {/* 提示 */}
      <div className="absolute left-[761px] top-[166px] h-[68px] w-[232px] border border-[#b4c4cc] bg-[#e2f1fa] pl-[14px] pt-[12px] text-[#3b3b3b] shadow-[1px_1px_3px_rgba(0,0,0,.5)]">
        <div className="flex items-center gap-[6px] text-[12px] font-bold">
          {offset}
          偏移
        </div>
        <div className="mt-[7px] whitespace-nowrap text-[11.6px]">使用恒定或可变距离偏移曲面或曲线。</div>
      </div>
    </div>
  );
}
